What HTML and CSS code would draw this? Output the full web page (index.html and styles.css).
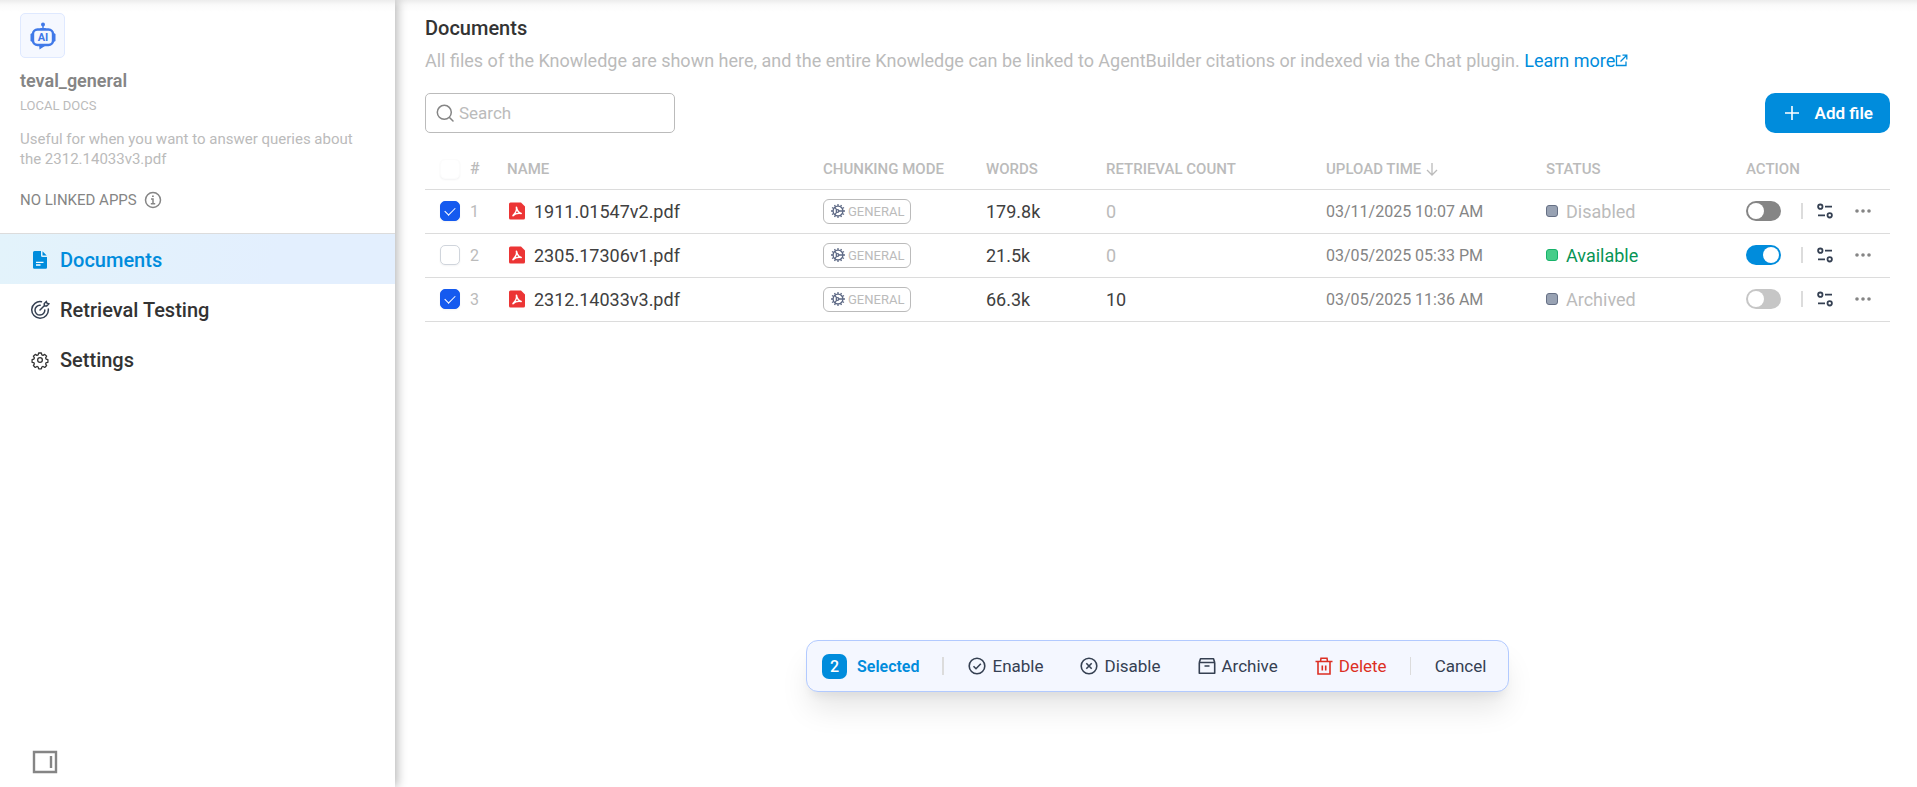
FILE: index.html
```html
<!DOCTYPE html>
<html lang="en">
<head>
<meta charset="utf-8">
<title>Documents</title>
<link rel="stylesheet" href="styles.css">
</head>
<body>
<svg class="sprite" aria-hidden="true">
  <symbol id="pdf" viewBox="0 0 16 18">
    <path fill="#ec3535" d="M1.500.500H12L16 4.500V16a1.500 1.500 0 0 1-1.500 1.500h-13A1.500 1.500 0 0 1 0 16V2A1.500 1.500 0 0 1 1.500.500Z"/>
    <path fill="none" stroke="#fff" stroke-width="1.500" stroke-linecap="round" stroke-linejoin="round" d="M7.400 5.200C8 7.500 7 10.500 4 13.600c1.800-1.800 5-2.700 8.200-2.200C10 10.800 8 8.500 7.400 5.200Z"/>
  </symbol>
  <symbol id="mode" viewBox="0 0 14 14">
    <g fill="none" stroke="#5d6985" stroke-width="1.300">
      <circle cx="7" cy="7" r="4.900"/>
      <path d="M7 0v2M7 12v2M0 7h2M3.500 1l1 1.700M10.500 1l-1 1.700M3.500 13l1-1.700M10.500 13l-1-1.700M1 3.500l1.700 1M1 10.500l1.700-1M13 3.500l-1.700 1M13 10.500l-1.700-1M5.700 6 4 3.300M5.700 8 4 10.700M8 7h6"/>
      <circle cx="6.500" cy="7" r="1.300"/>
    </g>
  </symbol>
  <symbol id="sliders" viewBox="0 0 16 16">
    <g fill="none" stroke="#354052" stroke-width="1.800">
      <circle cx="3.300" cy="3.700" r="2.200"/><circle cx="12.700" cy="12.300" r="2.200"/><path d="M8 3.700h7M1 12.300h7"/>
    </g>
  </symbol>
  <symbol id="dots" viewBox="0 0 16 16">
    <g fill="#858585"><circle cx="2" cy="8" r="1.800"/><circle cx="8" cy="8" r="1.800"/><circle cx="14" cy="8" r="1.800"/></g>
  </symbol>
</svg>
<div class="app">
  <aside class="sidebar">
    <header class="kb">
      <div class="kb-logo">
        <svg width="26" height="28" viewBox="0 0 26 28">
          <circle cx="13" cy="2.500" r="2" fill="#4079e8"/>
          <path fill="#4079e8" d="M12.300 3h1.400v3h2v2h-5.400V6h2zM.500 12 3 10.500v10L.500 19zM25.500 12 23 10.500v10l2.500-1.500zM9 22h9l-8.500 5.500z"/>
          <rect x="3" y="7.500" width="20" height="15.500" rx="4.500" fill="#f5f8ff" stroke="#4079e8" stroke-width="2.400"/>
          <text class="logo-text" x="13" y="19" text-anchor="middle">AI</text>
        </svg>
      </div>
      <h2 class="kb-name">teval_general</h2>
      <p class="kb-type">LOCAL DOCS</p>
      <p class="kb-desc">Useful for when you want to answer queries about the 2312.14033v3.pdf</p>
      <p class="kb-linked">NO LINKED APPS
        <svg width="18" height="18" viewBox="0 0 18 18" fill="none" stroke="#858585" stroke-width="1.500"><circle cx="9" cy="9" r="7.500"/><path d="M7 8h2v4.500M6.800 12.700h4.400M8 5.300h1.800" /></svg>
      </p>
    </header>
    <nav class="nav">
      <a class="nav-item active" href="#documents">
        <svg width="20" height="20" viewBox="0 0 20 20"><path fill="#008cdc" d="M4.500 1H11v4.500A1.500 1.500 0 0 0 12.500 7H17v10.500a1.300 1.300 0 0 1-1.300 1.300H4.300A1.300 1.300 0 0 1 3 17.500v-15A1.500 1.500 0 0 1 4.500 1zM12.500 1.300l4.200 4.200h-4.200z"/><path stroke="#fff" stroke-width="1.300" d="M6 12.300h7.500M6 15h4.500"/></svg>
        Documents
      </a>
      <a class="nav-item" href="#testing">
        <svg width="20" height="20" viewBox="0 0 20 20" fill="none" stroke="#354052" stroke-width="1.500" stroke-linecap="round"><path d="M11.500 1.700A8.300 8.300 0 1 0 18.300 9M10.200 5.300a4.900 4.900 0 1 0 4.600 4.600M10 10l4.300-4.300M14.300 5.700V3.500l2-2 .7 1.700 1.700.7-2 2z"/></svg>
        Retrieval Testing
      </a>
      <a class="nav-item" href="#settings">
        <svg width="20" height="20" viewBox="-1 -1 22 22" fill="none" stroke="#333" stroke-width="1.400" stroke-linejoin="round"><circle cx="10" cy="10" r="2.600"/><path d="M8.500 2.300h3l.5 2 1.400.6 1.800-1.100 2.100 2.100-1.100 1.800.5 1.300 2 .5v3l-2 .5-.5 1.300 1.100 1.800-2.100 2.100-1.800-1.100-1.400.6-.5 2h-3l-.5-2-1.400-.6-1.800 1.100-2.100-2.100 1.100-1.800-.5-1.300-2-.5v-3l2-.5.5-1.300-1.100-1.800 2.100-2.100 1.800 1.100L8 4.300z"/></svg>
        Settings
      </a>
    </nav>
    <button class="collapse" type="button" aria-label="Collapse sidebar">
      <svg width="26" height="24" viewBox="0 0 26 24" fill="none" stroke="#858585" stroke-width="2.400"><path d="M2 2h22v20H2zM19 6v12"/></svg>
    </button>
  </aside>
  <main class="main">
    <h1 class="title">Documents</h1>
    <p class="intro">All files of the Knowledge are shown here, and the entire Knowledge can be linked to AgentBuilder citations or indexed via the Chat plugin. <a href="#more">Learn more<svg width="13" height="13" viewBox="0 0 13 13" fill="none" stroke="#008cdc" stroke-width="1.300"><path d="M5.500 2H1.500v9.500H11v-4M7.500 1.200h4.300v4.300M11.500 1.500 5.500 7.500"/></svg></a></p>
    <div class="toolbar">
      <label class="search">
        <svg width="18" height="18" viewBox="0 0 18 18" fill="none" stroke="#858585" stroke-width="1.500" stroke-linecap="round"><circle cx="8.300" cy="8.300" r="7"/><path d="m13.500 13.500 3.500 3.500"/></svg>
        <input type="text" placeholder="Search" aria-label="Search">
      </label>
      <button class="add" type="button">
        <svg width="16" height="16" viewBox="0 0 16 16" stroke="#fff" stroke-width="1.600"><path d="M8 1v14M1 8h14"/></svg>
        Add file
      </button>
    </div>
    <table class="docs">
      <colgroup><col class="c-num"><col><col class="c-mode"><col class="c-words"><col class="c-count"><col class="c-time"><col class="c-status"><col class="c-action"></colgroup>
      <thead>
        <tr>
          <th><div class="pick"><input class="check faint" type="checkbox" aria-label="Select all">#</div></th>
          <th>NAME</th><th>CHUNKING MODE</th><th>WORDS</th><th>RETRIEVAL COUNT</th>
          <th><div class="sort">UPLOAD TIME <svg width="12" height="14" viewBox="0 0 12 14" fill="none" stroke="#bbb" stroke-width="1.300"><path d="M6 1v12M1 8l5 5 5-5"/></svg></div></th>
          <th>STATUS</th><th>ACTION</th>
        </tr>
      </thead>
      <tbody>
        <tr>
          <td><div class="pick"><input class="check" type="checkbox" checked aria-label="Select 1911.01547v2.pdf">1</div></td>
          <td><div class="file"><svg width="16" height="18"><use href="#pdf"/></svg>1911.01547v2.pdf</div></td>
          <td><span class="mode"><svg width="14" height="14"><use href="#mode"/></svg>GENERAL</span></td>
          <td>179.8k</td><td class="zero">0</td><td class="time">03/11/2025 10:07 AM</td>
          <td><div class="status">Disabled</div></td>
          <td><div class="actions"><input class="switch" type="checkbox" role="switch" aria-label="Enable 1911.01547v2.pdf"><span class="bar"></span><button type="button" aria-label="Chunk settings"><svg width="16" height="16"><use href="#sliders"/></svg></button><button type="button" aria-label="More"><svg width="16" height="16"><use href="#dots"/></svg></button></div></td>
        </tr>
        <tr>
          <td><div class="pick"><input class="check" type="checkbox" aria-label="Select 2305.17306v1.pdf">2</div></td>
          <td><div class="file"><svg width="16" height="18"><use href="#pdf"/></svg>2305.17306v1.pdf</div></td>
          <td><span class="mode"><svg width="14" height="14"><use href="#mode"/></svg>GENERAL</span></td>
          <td>21.5k</td><td class="zero">0</td><td class="time">03/05/2025 05:33 PM</td>
          <td><div class="status available">Available</div></td>
          <td><div class="actions"><input class="switch" type="checkbox" role="switch" checked aria-label="Enable 2305.17306v1.pdf"><span class="bar"></span><button type="button" aria-label="Chunk settings"><svg width="16" height="16"><use href="#sliders"/></svg></button><button type="button" aria-label="More"><svg width="16" height="16"><use href="#dots"/></svg></button></div></td>
        </tr>
        <tr>
          <td><div class="pick"><input class="check" type="checkbox" checked aria-label="Select 2312.14033v3.pdf">3</div></td>
          <td><div class="file"><svg width="16" height="18"><use href="#pdf"/></svg>2312.14033v3.pdf</div></td>
          <td><span class="mode"><svg width="14" height="14"><use href="#mode"/></svg>GENERAL</span></td>
          <td>66.3k</td><td>10</td><td class="time">03/05/2025 11:36 AM</td>
          <td><div class="status">Archived</div></td>
          <td><div class="actions"><input class="switch" type="checkbox" role="switch" disabled aria-label="Enable 2312.14033v3.pdf"><span class="bar"></span><button type="button" aria-label="Chunk settings"><svg width="16" height="16"><use href="#sliders"/></svg></button><button type="button" aria-label="More"><svg width="16" height="16"><use href="#dots"/></svg></button></div></td>
        </tr>
      </tbody>
    </table>
    <div class="batch">
      <div class="selected"><span class="count">2</span>Selected</div>
      <span class="bar"></span>
      <button type="button"><svg width="18" height="18" viewBox="0 0 18 18" fill="none" stroke="#354052" stroke-width="1.600"><circle cx="9" cy="9" r="7.800"/><path d="m5.500 9.200 2.500 2.500 4.800-5"/></svg>Enable</button>
      <button type="button"><svg width="18" height="18" viewBox="0 0 18 18" fill="none" stroke="#354052" stroke-width="1.600"><circle cx="9" cy="9" r="7.800"/><path d="m6.300 6.300 5.400 5.400M11.700 6.300l-5.400 5.400"/></svg>Disable</button>
      <button type="button"><svg width="18" height="18" viewBox="0 0 18 18" fill="none" stroke="#354052" stroke-width="1.600" stroke-linejoin="round"><path d="M1.300 5.500v10.700h15.400V5.500zM1.300 5.500 2.500 1.800h13l1.200 3.700M6.500 9h5"/></svg>Archive</button>
      <button class="danger" type="button"><svg width="18" height="18" viewBox="0 0 18 18" fill="none" stroke="#dc2f24" stroke-width="1.600"><path d="M.500 4.500h17M3 4.500V17h12V4.500M5.500 4.500l.5-3.300h6l.5 3.300M7.300 8.500v5M10.700 8.500v5"/></svg>Delete</button>
      <span class="bar thin"></span>
      <button type="button">Cancel</button>
    </div>
  </main>
</div>
</body>
</html>
```
FILE: styles.css
```css
* { box-sizing: border-box; }
body { margin: 0; font-family: Roboto, "Liberation Sans", sans-serif; font-size: 18px; color: #333; background: #fff; }
h1, h2, p { margin: 0; }
svg { flex: none; }
button { font: inherit; color: inherit; background: none; border: 0; padding: 0; display: flex; align-items: center; }
a { color: #008cdc; text-decoration: none; }
.sprite { position: absolute; width: 0; height: 0; }
.app { display: flex; min-height: 100vh; background: linear-gradient(#ececec, #fafafa 5px, #fff 12px); }

.sidebar { width: 395px; flex: none; display: flex; flex-direction: column; box-shadow: 2px 0 10px rgba(0, 0, 0, .3); clip-path: inset(0 -20px 0 0); }
.kb { padding: 13px 20px 23px; border-bottom: 1px solid #dcdcdc; }
.kb-logo { width: 45px; height: 45px; display: flex; align-items: center; justify-content: center; background: #f5f8ff; border: 1px solid #dfe9ff; border-radius: 5px; }
.logo-text { font-size: 11px; font-weight: 700; fill: #4079e8; }
.kb-name { margin-top: 10px; font-size: 18px; line-height: 26px; font-weight: 600; color: #858585; }
.kb-type { margin-top: 2px; font-size: 13px; line-height: 20px; color: #bbb; }
.kb-desc { margin-top: 13px; font-size: 15px; line-height: 20px; color: #bbb; }
.kb-linked { margin-top: 21px; display: flex; align-items: center; gap: 7px; font-size: 15px; line-height: 20px; color: #858585; }
.nav { display: flex; flex-direction: column; }
.nav-item { display: flex; align-items: center; gap: 10px; height: 50px; padding: 2px 30px 0; font-size: 20px; font-weight: 500; color: #333; }
.nav-item.active { color: #008cdc; background: linear-gradient(100deg, #e3f3fb, #e3effe 70%); }
.collapse { margin: auto 0 13px 32px; align-self: flex-start; }

.main { position: relative; flex: 1; min-width: 0; padding: 14px 27px 0 30px; }
.title { font-size: 20px; line-height: 28px; font-weight: 500; }
.intro { margin-top: 6px; font-size: 18px; line-height: 25px; color: #bbb; }
.toolbar { margin-top: 20px; display: flex; justify-content: space-between; }
.search { width: 250px; height: 40px; padding: 0 10px; display: flex; align-items: center; gap: 5px; border: 1px solid #bbb; border-radius: 5px; }
.search input { flex: 1; min-width: 0; border: 0; padding: 0; outline: 0; font: inherit; font-size: 17px; background: none; }
.search input::placeholder { color: #bbb; }
.add { height: 40px; padding: 0 17px 0 19px; gap: 15px; border-radius: 10px; background: #008cdc; color: #fff; font-size: 17px; font-weight: 600; }

.docs { width: 100%; margin-top: 16px; border-collapse: collapse; table-layout: fixed; }
.c-num { width: 72px; }
.c-mode { width: 163px; }
.c-words { width: 120px; }
.c-count, .c-time { width: 220px; }
.c-status { width: 200px; }
.c-action { width: 154px; }
th, td { padding: 0 10px; text-align: left; border-bottom: 1px solid #dcdcdc; white-space: nowrap; }
th { height: 40px; font-size: 15px; font-weight: 500; color: #bbb; }
td { height: 44px; color: #404040; }
th:first-child, td:first-child { padding: 0 0 0 15px; }
.pick { display: flex; align-items: center; gap: 10px; font-size: 16px; color: #bbb; }
.check { appearance: none; width: 20px; height: 20px; margin: 0; display: grid; place-content: center; background: #fff; border: 1px solid #d0d5dc; border-radius: 5px; box-shadow: 0 1px 2px rgba(16, 24, 40, .05); }
.check.faint { border-color: #fcfcfc; }
.check:checked { background: #155aef; border-color: #155aef; }
.check:checked::before { content: ""; width: 9px; height: 5px; margin-bottom: 3px; border: solid #fff; border-width: 0 0 1px 1px; transform: rotate(-45deg); }
.sort { display: flex; align-items: center; gap: 5px; }
.file { display: flex; align-items: center; gap: 9px; padding-left: 2px; }
.mode { display: inline-flex; vertical-align: middle; align-items: center; gap: 3px; height: 25px; padding: 0 6px 0 7px; border: 1px solid #bbb; border-radius: 6px; font-size: 13px; color: #bbb; }
td.zero { color: #bbb; }
td.time { font-size: 16px; color: #858585; }
.status { display: flex; align-items: center; gap: 8px; color: #bbb; }
.status::before { content: ""; width: 10px; height: 10px; border: 1px solid #667085; border-radius: 3px; background: #98a2b3; }
.status.available { color: #079455; }
.status.available::before { background: #47cd89; border-color: #17b26a; }
.actions { display: flex; align-items: center; }
.switch { appearance: none; width: 35px; height: 20px; margin: 0; padding: 2px; display: flex; border-radius: 10px; background: #858585; }
.switch::before { content: ""; width: 16px; height: 16px; border-radius: 50%; background: #fff; }
.switch:checked { justify-content: flex-end; background: #008cdc; }
.switch:disabled { background: #c6c6c6; }
.bar { width: 2px; height: 16px; background: #dcdcdc; }
.actions .bar { margin: 0 14px 0 20px; }
.actions button + button { margin-left: 22px; }

.batch { position: absolute; left: 411px; bottom: 95px; height: 52px; display: flex; align-items: center; padding: 0 22px 0 15px; border: 1px solid #b2caff; border-radius: 12px; background: #f4f7ff; box-shadow: 0 20px 30px -4px rgba(0, 0, 0, .1), 0 8px 10px -4px rgba(0, 0, 0, .06); color: #354052; font-size: 17px; white-space: nowrap; }
.selected { display: flex; align-items: center; gap: 10px; color: #008cdc; font-size: 16px; font-weight: 600; }
.count { width: 25px; height: 25px; display: grid; place-items: center; border-radius: 7px; background: #008cdc; color: #fff; font-weight: 500; }
.batch .bar { height: 18px; margin: 0 24px 0 23px; }
.batch .bar.thin { width: 1px; margin: 0 24px 0 23px; }
.batch button { gap: 6px; }
.batch button + button { margin-left: 37px; }
.danger { color: #dc2f24; }
```
